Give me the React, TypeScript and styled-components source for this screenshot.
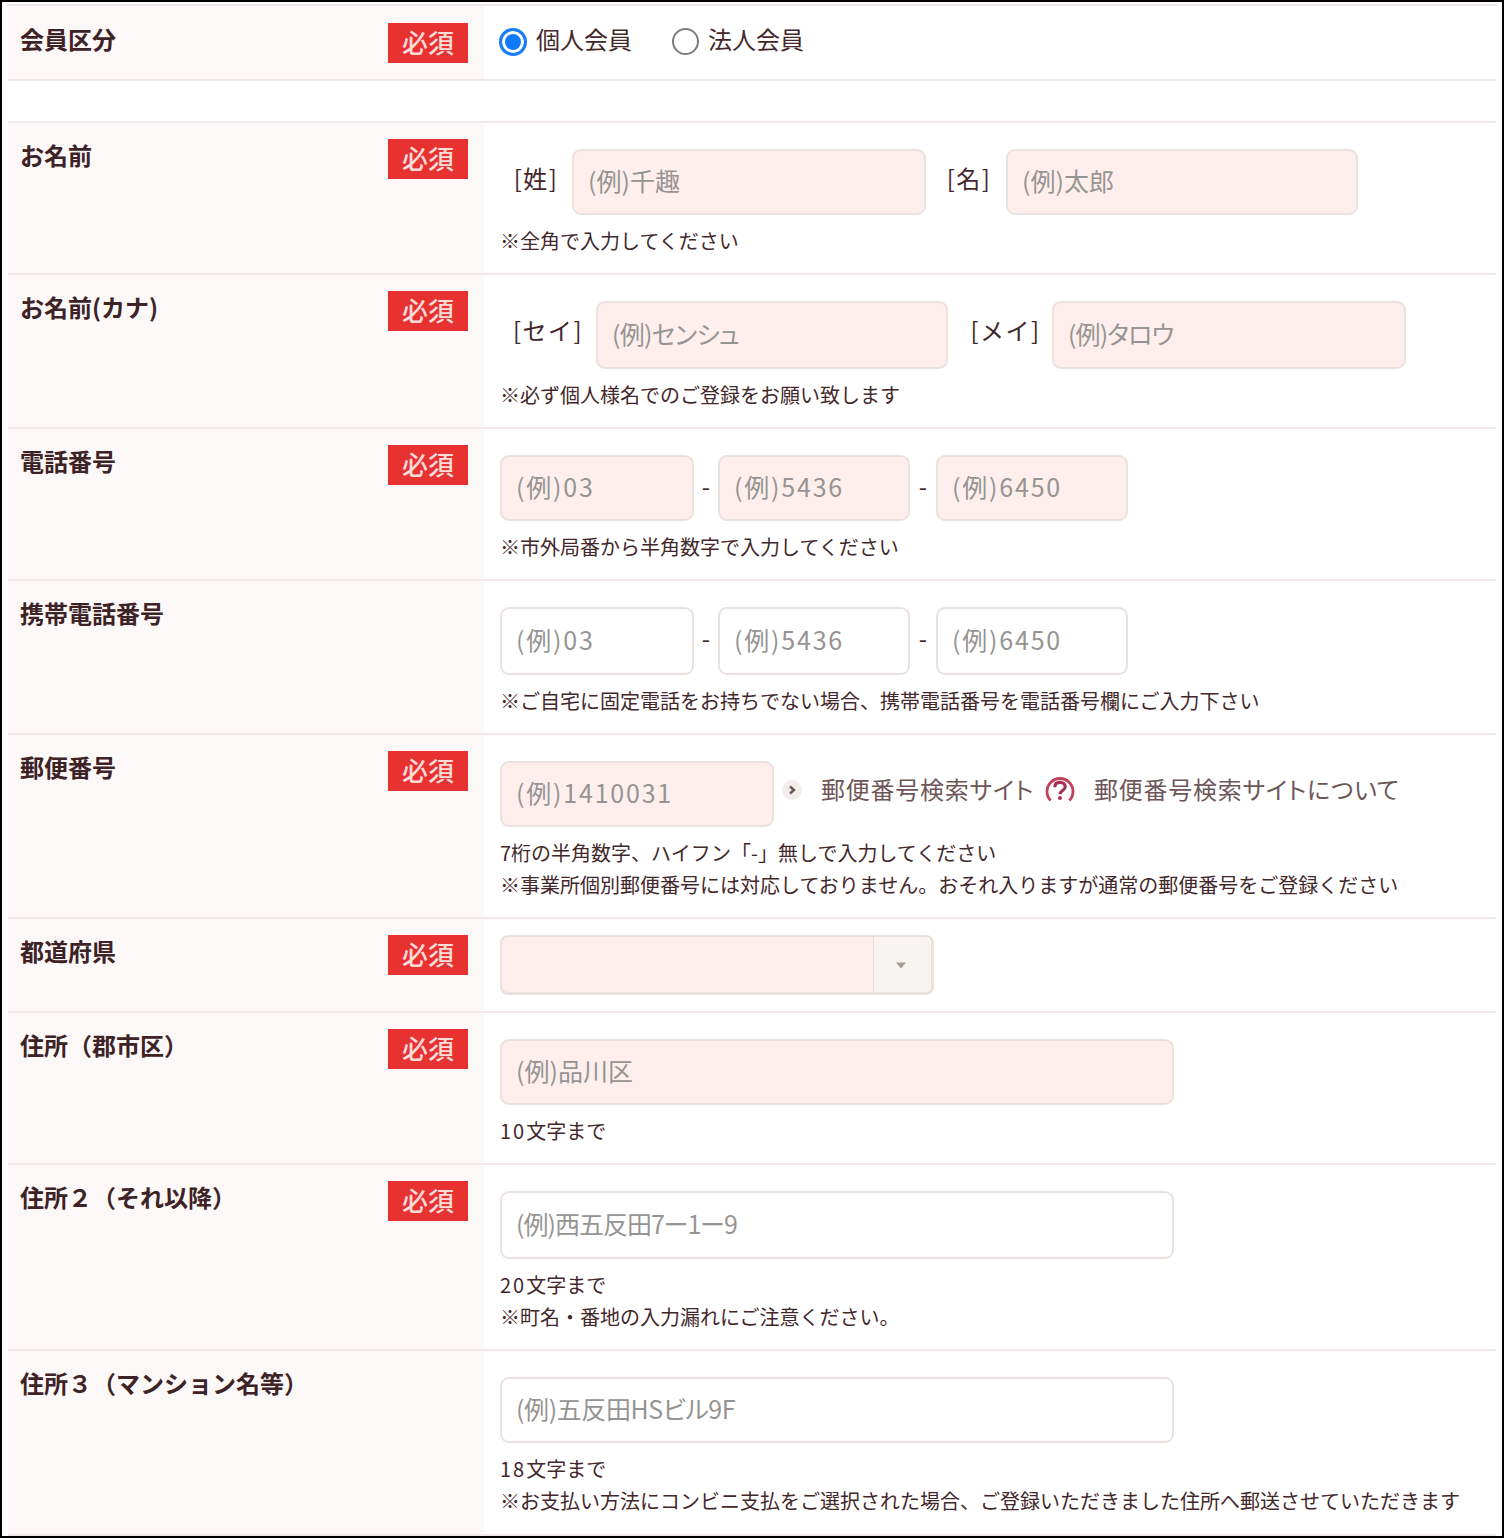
import React from "react"
import styled, { createGlobalStyle } from "styled-components"

const GlobalStyle = createGlobalStyle`
html, body {
  margin: 0;
  padding: 0;
  background: #ffffff;
}
`

const RequiredBadgeText = "必須"

const Required = () => <Badge>{RequiredBadgeText}</Badge>

const HelpIcon = () => (
  <HelpWrap>
    <svg width="30" height="24" viewBox="0 0 30 24" fill="none">
      <path d="M5.6 23.5A13 13 0 1 1 24.4 23.5" stroke="#c2405a" strokeWidth="2.8" />
      <path
        d="M9.8 10.2C9.8 7 12 5.4 15 5.4s5.2 1.7 5.2 4.3c0 3.9-5.2 3.6-5.2 7.6"
        stroke="#a83050"
        strokeWidth="3.2"
      />
      <circle cx="15" cy="21" r="2" fill="#a83050" />
    </svg>
  </HelpWrap>
)

const PhoneFields = ({ $tint }: { $tint?: boolean }) => (
  <InputRow>
    <Field $w={194} $h={$tint ? 66 : 68} $tint={$tint} $ls={1.8} placeholder="(例)03" />
    <Dash $w={24}>-</Dash>
    <Field $w={192} $h={$tint ? 66 : 68} $tint={$tint} $ls={1.8} placeholder="(例)5436" />
    <Dash $w={26}>-</Dash>
    <Field $w={192} $h={$tint ? 66 : 68} $tint={$tint} $ls={1.8} placeholder="(例)6450" />
  </InputRow>
)

const App: React.FC = () => {
  return (
    <Frame>
      <GlobalStyle />
      <Table>
        <Row $h={75}>
          <LabelCell $top={17}>
            <LabelText>会員区分</LabelText>
            <Required />
          </LabelCell>
          <RadioCell>
            <RadioLabel $w={173}>
              <Radio type="radio" name="kind" defaultChecked />
              個人会員
            </RadioLabel>
            <RadioLabel>
              <Radio type="radio" name="kind" />
              法人会員
            </RadioLabel>
          </RadioCell>
        </Row>
        <Spacer />

        <Row $h={152}>
          <LabelCell>
            <LabelText>お名前</LabelText>
            <Required />
          </LabelCell>
          <ValueCell>
            <InputRow>
              <Tag $w={72}>[姓]</Tag>
              <Field $w={354} $h={66} $tint placeholder="(例)千趣" />
              <Tag $w={80} $left={6}>[名]</Tag>
              <Field $w={352} $h={66} $tint placeholder="(例)太郎" />
            </InputRow>
            <Notes>
              <Note>※全角で入力してください</Note>
            </Notes>
          </ValueCell>
        </Row>

        <Row $h={154}>
          <LabelCell>
            <LabelText>お名前(カナ)</LabelText>
            <Required />
          </LabelCell>
          <ValueCell>
            <InputRow>
              <Tag $w={96}>[セイ]</Tag>
              <Field $w={352} $h={68} $tint $ls={-0.7} placeholder="(例)センシュ" />
              <Tag $w={104} $left={11}>[メイ]</Tag>
              <Field $w={354} $h={68} $tint $ls={-0.9} placeholder="(例)タロウ" />
            </InputRow>
            <Notes>
              <Note>※必ず個人様名でのご登録をお願い致します</Note>
            </Notes>
          </ValueCell>
        </Row>

        <Row $h={152}>
          <LabelCell>
            <LabelText>電話番号</LabelText>
            <Required />
          </LabelCell>
          <ValueCell>
            <PhoneFields $tint />
            <Notes>
              <Note>※市外局番から半角数字で入力してください</Note>
            </Notes>
          </ValueCell>
        </Row>

        <Row $h={154}>
          <LabelCell>
            <LabelText>携帯電話番号</LabelText>
          </LabelCell>
          <ValueCell>
            <PhoneFields />
            <Notes>
              <Note>※ご自宅に固定電話をお持ちでない場合、携帯電話番号を電話番号欄にご入力下さい</Note>
            </Notes>
          </ValueCell>
        </Row>

        <Row $h={184}>
          <LabelCell>
            <LabelText>郵便番号</LabelText>
            <Required />
          </LabelCell>
          <ValueCell>
            <InputRow>
              <Field $w={274} $h={66} $tint $ls={1.8} placeholder="(例)1410031" />
              <PostLinks>
                <ArrowDot>
                  <svg width="8" height="10" viewBox="0 0 8 10">
                    <path d="M2 1.5L6 5L2 8.5" fill="none" stroke="#6e5656" strokeWidth="2.4" />
                  </svg>
                </ArrowDot>
                <LinkText>郵便番号検索サイト</LinkText>
                <HelpIcon />
                <LinkText>郵便番号検索サイトについて</LinkText>
              </PostLinks>
            </InputRow>
            <Notes>
              <Note>7桁の半角数字、ハイフン「-」無しで入力してください</Note>
              <Note>※事業所個別郵便番号には対応しておりません。おそれ入りますが通常の郵便番号をご登録ください</Note>
            </Notes>
          </ValueCell>
        </Row>

        <Row $h={94}>
          <LabelCell>
            <LabelText>都道府県</LabelText>
            <Required />
          </LabelCell>
          <SelectCell>
            <SelectBox>
              <SelectArrow>
                <svg width="12" height="7" viewBox="0 0 12 7">
                  <path d="M1 0.5H11L6 6.5Z" fill="#a89a98" />
                </svg>
              </SelectArrow>
            </SelectBox>
          </SelectCell>
        </Row>

        <Row $h={152}>
          <LabelCell>
            <LabelText>住所（郡市区）</LabelText>
            <Required />
          </LabelCell>
          <ValueCell>
            <Field $w={674} $h={66} $tint placeholder="(例)品川区" />
            <Notes>
              <Note><Num>10</Num>文字まで</Note>
            </Notes>
          </ValueCell>
        </Row>

        <Row $h={186}>
          <LabelCell>
            <LabelText>住所２（それ以降）</LabelText>
            <Required />
          </LabelCell>
          <ValueCell>
            <Field $w={674} $h={68} $ls={-1} placeholder="(例)西五反田7ー1ー9" />
            <Notes>
              <Note><Num>20</Num>文字まで</Note>
              <Note>※町名・番地の入力漏れにご注意ください。</Note>
            </Notes>
          </ValueCell>
        </Row>

        <Row $h={185}>
          <LabelCell>
            <LabelText>住所３（マンション名等）</LabelText>
          </LabelCell>
          <ValueCell>
            <Field $w={674} $h={66} $ls={-0.4} placeholder="(例)五反田HSビル9F" />
            <Notes>
              <Note><Num>18</Num>文字まで</Note>
              <Note>※お支払い方法にコンビニ支払をご選択された場合、ご登録いただきました住所へ郵送させていただきます</Note>
            </Notes>
          </ValueCell>
        </Row>
      </Table>
    </Frame>
  )
}

export default App

const Frame = styled.div`
  box-sizing: border-box;
  width: 1504px;
  height: 1538px;
  border: 2px solid #000000;
  padding: 2px 6px 0;
  background: #ffffff;
  overflow: hidden;
  color: #43282b;
  font-family: "Noto Sans CJK JP", "Noto Sans", sans-serif;
`

const Table = styled.div`
  display: flex;
  flex-direction: column;
  border-top: 2px solid #f1e9e9;
`

const Row = styled.div<{ $h: number }>`
  box-sizing: border-box;
  display: flex;
  height: ${(p) => p.$h}px;
  border-bottom: 2px solid #f1e9e9;
`

const Spacer = styled.div`
  box-sizing: border-box;
  height: 42px;
  border-bottom: 2px solid #f1e9e9;
`

const LabelCell = styled.div<{ $top?: number }>`
  box-sizing: border-box;
  display: flex;
  flex: 0 0 476px;
  justify-content: space-between;
  align-items: flex-start;
  padding: ${(p) => p.$top ?? 16}px 16px 0 12px;
  background: #fbf8f7;
`

const LabelText = styled.div`
  font-size: 24px;
  font-weight: 700;
  line-height: 32px;
  color: #3d2226;
`

const Badge = styled.div`
  box-sizing: border-box;
  width: 80px;
  height: 40px;
  padding-bottom: 2px;
  display: flex;
  justify-content: center;
  align-items: center;
  background: #e83232;
  color: #fbdcd9;
  font-size: 26px;
  font-weight: 500;
  line-height: 38px;
`

const ValueCell = styled.div`
  flex: 1;
  min-width: 0;
  padding: 26px 0 0 16px;
`

const RadioCell = styled.div`
  display: flex;
  align-items: center;
  flex: 1;
  padding: 0 0 8px 15px;
`

const SelectCell = styled.div`
  flex: 1;
  padding: 16px 0 0 16px;
`

const RadioLabel = styled.label<{ $w?: number }>`
  display: flex;
  align-items: center;
  gap: 9px;
  width: ${(p) => (p.$w ? `${p.$w}px` : "auto")};
  font-size: 24px;
  line-height: 34px;
`

const Radio = styled.input`
  appearance: none;
  box-sizing: border-box;
  width: 27px;
  height: 27px;
  margin: 6px 0 0;
  border: 2px solid #7d7d7d;
  border-radius: 50%;
  background: #ffffff;

  &:checked {
    width: 28px;
    height: 28px;
    border: 3px solid #1a7ef5;
    box-shadow: inset 0 0 0 3px #ffffff;
    background: #0f7bfa;
  }
`

const InputRow = styled.div`
  display: flex;
  align-items: flex-start;
`

const Field = styled.input<{ $w: number; $h: number; $tint?: boolean; $ls?: number }>`
  box-sizing: border-box;
  display: block;
  width: ${(p) => p.$w}px;
  height: ${(p) => p.$h}px;
  padding: 0 14px 4px;
  border: 2px solid #e9e2df;
  border-radius: 9px;
  outline: none;
  background: ${(p) => (p.$tint ? "#feefec" : "#ffffff")};
  font-family: inherit;
  font-size: 25px;
  font-feature-settings: "palt";
  letter-spacing: ${(p) => p.$ls ?? 0}px;

  &::placeholder {
    color: #969492;
    opacity: 1;
  }
`

const Tag = styled.div<{ $w: number; $left?: number }>`
  box-sizing: border-box;
  flex: 0 0 ${(p) => p.$w}px;
  padding-left: ${(p) => p.$left ?? 0}px;
  text-align: center;
  font-size: 24px;
  line-height: 58px;
  letter-spacing: 1.5px;
`

const Dash = styled.div<{ $w: number }>`
  flex: 0 0 ${(p) => p.$w}px;
  text-align: center;
  font-size: 24px;
  line-height: 62px;
`

const Notes = styled.div`
  margin-top: 10px;
`

const Note = styled.div`
  font-size: 20px;
  line-height: 32px;
  white-space: nowrap;
`

const Num = styled.span`
  letter-spacing: 2px;
`

const PostLinks = styled.div`
  display: flex;
  align-items: center;
  height: 56px;
  margin-left: 8px;
`

const ArrowDot = styled.span`
  flex: 0 0 20px;
  width: 20px;
  height: 20px;
  margin: 2px 19px 0 0;
  display: flex;
  justify-content: center;
  align-items: center;
  border-radius: 50%;
  background: #f3eeec;
`

const LinkText = styled.span`
  font-size: 24px;
  line-height: 34px;
  color: #6e5658;
  white-space: nowrap;
  font-feature-settings: "palt";
  letter-spacing: 0.75px;
`

const HelpWrap = styled.span`
  display: flex;
  align-self: flex-start;
  margin: 16px 19px 0 11px;
`

const SelectBox = styled.div`
  box-sizing: border-box;
  display: flex;
  justify-content: flex-end;
  width: 434px;
  height: 60px;
  border: 2px solid #e9e2df;
  border-right-width: 3px;
  border-bottom-width: 3px;
  border-radius: 8px;
  background: #feefec;
  overflow: hidden;
`

const SelectArrow = styled.div`
  box-sizing: border-box;
  width: 58px;
  padding: 2px 4px 0 0;
  display: flex;
  justify-content: center;
  align-items: center;
  border-left: 1px solid #e9e0dc;
  background: #f8f4f2;
`
